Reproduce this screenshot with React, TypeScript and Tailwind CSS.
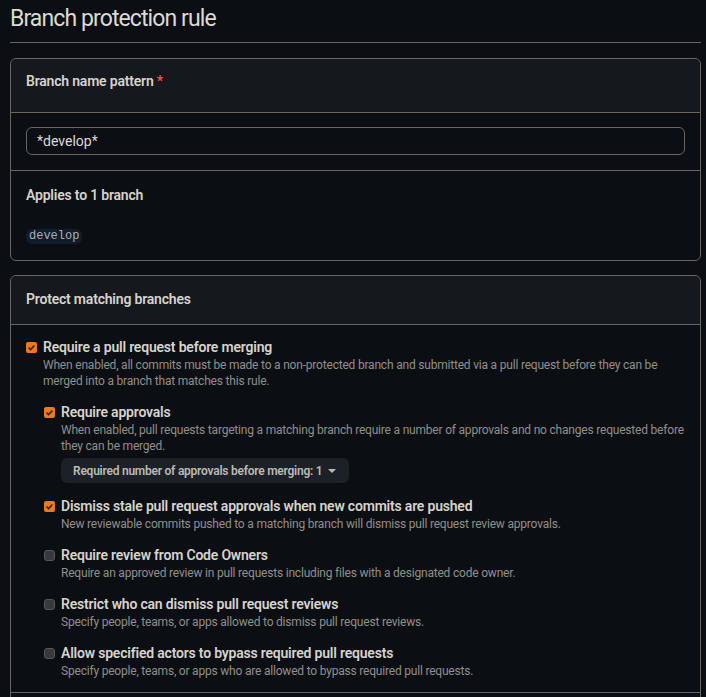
import React from "react";

const font = { fontFamily: "Roboto, 'Liberation Sans', sans-serif" };

function Check({ checked }: { checked: boolean }) {
  if (!checked) {
    return (
      <span className="mt-[5px] block h-[11px] w-[11px] shrink-0 rounded-[3px] border border-[#56575b] bg-[#38393c]" />
    );
  }
  return (
    <svg className="mt-[5px] shrink-0" width="11" height="11" viewBox="0 0 11 11">
      <rect width="11" height="11" rx="2" fill="#ea7a21" />
      <path d="M2.6 5.6 L4.6 7.6 L8.4 3.4" fill="none" stroke="#3a220c" strokeWidth="1.5" />
    </svg>
  );
}

function Option({
  checked,
  title,
  desc,
  children,
}: {
  checked: boolean;
  title: string;
  desc: string;
  children?: React.ReactNode;
}) {
  return (
    <div className="flex gap-[6px]">
      <Check checked={checked} />
      <div className="min-w-0 flex-1">
        <div className="text-[14px] font-semibold leading-5 tracking-[-0.2px] text-[#d6d3cd]">{title}</div>
        <p className="text-[12px] leading-4 tracking-[-0.2px] text-[#918f8a]">{desc}</p>
        {children}
      </div>
    </div>
  );
}

export default function App() {
  return (
    <div className="h-[697px] overflow-hidden bg-[#0b0e13] pl-[10px] pr-[5px]" style={font}>
      <h2 className="border-b border-[#6b655a] pb-[7px] pt-[3px] text-[23px] font-normal leading-8 tracking-[-0.9px] text-[#dcd9d3]">
        Branch protection rule
      </h2>

      <div className="mt-[15px] rounded-md border border-[#6b655a]">
        <div className="h-[54px] rounded-t-md border-b border-[#6b655a] bg-[#15181d] px-[15px] pt-[12px] text-[14px] font-semibold leading-5 tracking-[-0.2px] text-[#d6d3cd]">
          Branch name pattern <span className="text-[#f85149]">*</span>
        </div>
        <div className="border-b border-[#6b655a] px-[15px] pb-[15px] pt-[14px]">
          <div className="flex h-[28px] items-center rounded-md border border-[#6b655a] px-[10px] text-[14px] text-[#dcd9d3]">
            *develop*
          </div>
        </div>
        <div className="px-[15px] pb-[16px] pt-[14px]">
          <div className="text-[14px] font-semibold leading-5 tracking-[-0.2px] text-[#d6d3cd]">
            Applies to 1 branch
          </div>
          <div className="mt-[24px] flex">
            <code
              className="rounded-md bg-[#121c2b] px-[3px] text-[12px] leading-[15px] text-[#a9aeb3]"
              style={{ fontFamily: "'Liberation Mono', 'DejaVu Sans Mono', monospace" }}
            >
              develop
            </code>
          </div>
        </div>
      </div>

      <div className="mt-[14px] rounded-md border border-[#6b655a]">
        <div className="h-[49px] rounded-t-md border-b border-[#6b655a] bg-[#15181d] px-[15px] pt-[13px] text-[14px] font-semibold leading-5 tracking-[-0.2px] text-[#d6d3cd]">
          Protect matching branches
        </div>
        <div className="flex flex-col gap-[13px] border-b border-[#6b655a] pb-[13px] pl-[15px] pr-[14px] pt-[12px]">
          <Option
            checked
            title="Require a pull request before merging"
            desc="When enabled, all commits must be made to a non-protected branch and submitted via a pull request before they can be merged into a branch that matches this rule."
          >
            <div className="mt-[13px] flex flex-col gap-[13px] pl-px">
              <Option
                checked
                title="Require approvals"
                desc="When enabled, pull requests targeting a matching branch require a number of approvals and no changes requested before they can be merged."
              >
                <button
                  type="button"
                  className="mt-[4px] flex h-[25px] items-center gap-[6px] rounded-md bg-[#1c2027] pl-[12px] pr-[13px] text-[12px] font-semibold tracking-[-0.24px] text-[#bdbab4]"
                >
                  Required number of approvals before merging: 1
                  <svg width="8" height="4" viewBox="0 0 8 4">
                    <path d="M0 0 H8 L4 4 Z" fill="#bdbab4" />
                  </svg>
                </button>
              </Option>
              <Option
                checked
                title="Dismiss stale pull request approvals when new commits are pushed"
                desc="New reviewable commits pushed to a matching branch will dismiss pull request review approvals."
              />
              <Option
                checked={false}
                title="Require review from Code Owners"
                desc="Require an approved review in pull requests including files with a designated code owner."
              />
              <Option
                checked={false}
                title="Restrict who can dismiss pull request reviews"
                desc="Specify people, teams, or apps allowed to dismiss pull request reviews."
              />
              <Option
                checked={false}
                title="Allow specified actors to bypass required pull requests"
                desc="Specify people, teams, or apps who are allowed to bypass required pull requests."
              />
            </div>
          </Option>
        </div>
        <div className="h-[48px]" />
      </div>
    </div>
  );
}
